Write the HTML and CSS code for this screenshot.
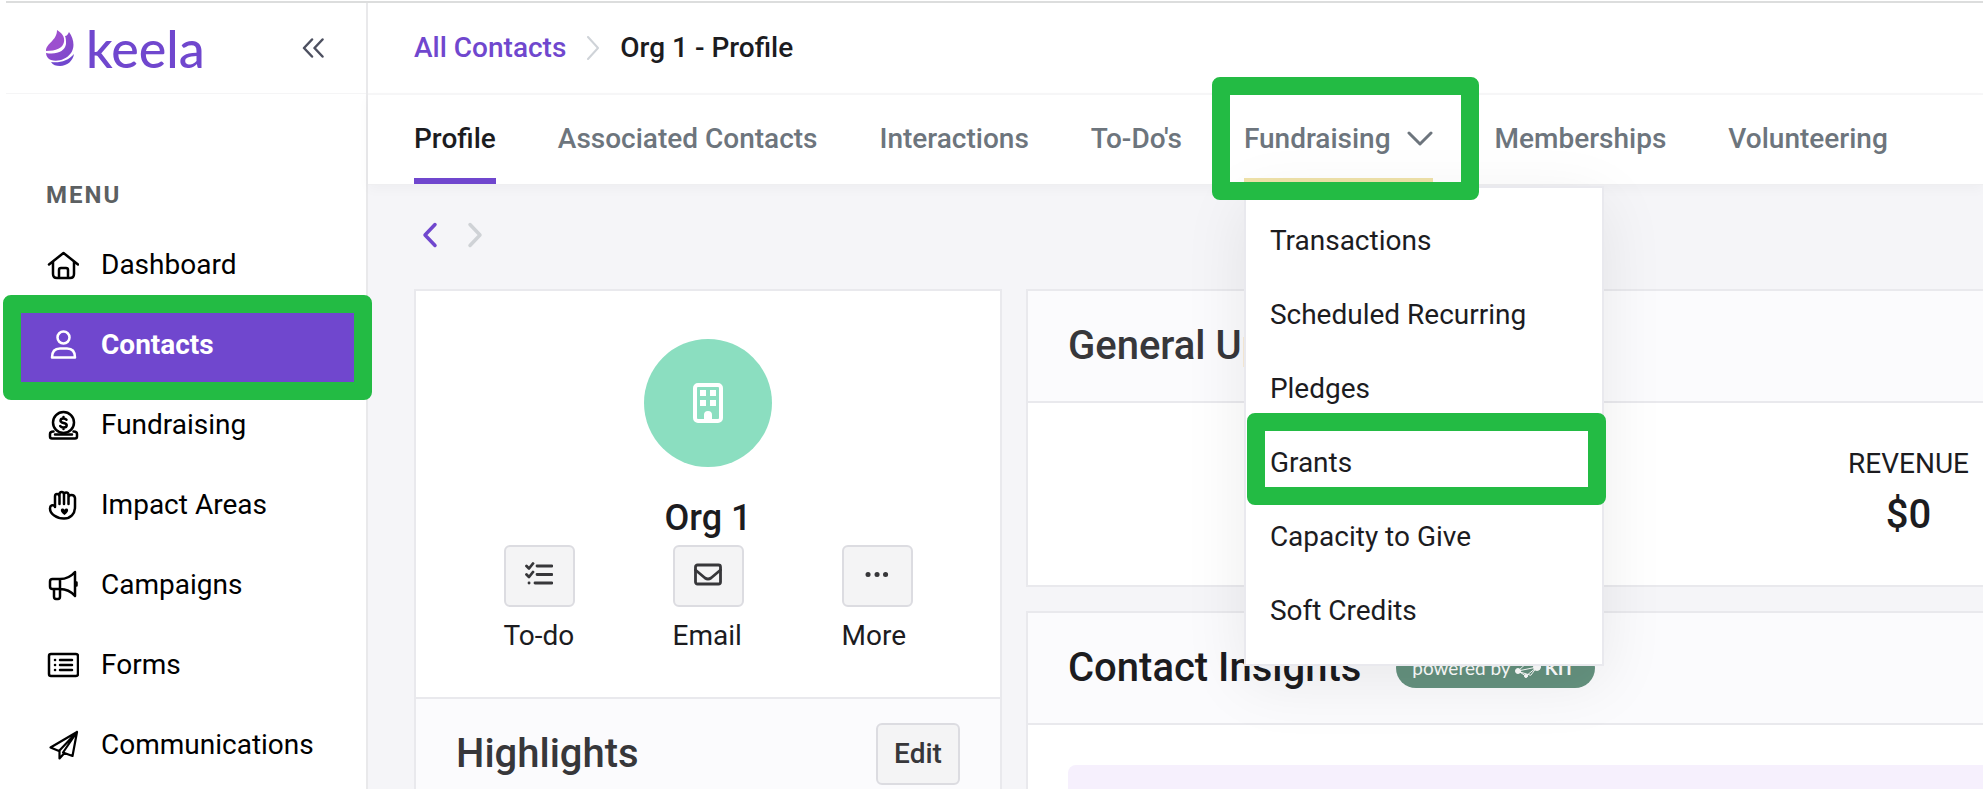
FILE: index.html
```html
<!DOCTYPE html>
<html lang="en">
<head>
<meta charset="utf-8">
<title>Org 1 - Profile</title>
<link rel="stylesheet" href="styles.css">
</head>
<body>
<div class="app">
  <aside class="sidebar">
    <div class="brand-bar">
      <a class="brand" href="#">
        <svg class="brand-mark" width="28" height="36" viewBox="0 0 28 36" aria-hidden="true">
          <defs>
            <linearGradient id="flame" x1="0" y1="0" x2="1" y2="1">
              <stop offset="0" stop-color="#9c4fcf"/>
              <stop offset="1" stop-color="#7a47cb"/>
            </linearGradient>
          </defs>
          <path fill="#9c4fcf" d="M11 0c5 3 8 7 7 12-1 6-8 9-18 9C0 13 11 11 11 0z"/>
          <path fill="url(#flame)" d="M23 2c5 7 6 15 2 21-5 7-14 9-20 7-3-1-5-4-5-7 11 2 19-2 20-9 0-3 0-6-1-8 2 0 3-2 4-4z"/>
          <path fill="#7047ce" d="M28 24c-1 7-7 12-14 12-4 0-7-1-9-4 9 1 17-1 23-8z"/>
        </svg>
        <span>keela</span>
      </a>
      <button class="icon-button collapse" type="button" aria-label="Collapse menu">
        <svg width="22" height="20" viewBox="0 0 22 20"><path d="M10 1.500 2 10l8 8.500M20.500 1.500l-8 8.500 8 8.500"/></svg>
      </button>
    </div>
    <h2 class="menu-title">MENU</h2>
    <nav class="menu">
      <a class="menu-item" href="#">
        <svg class="menu-icon" viewBox="0 0 32 32"><path d="M2 15.500 16.500 4 31 15.500M6 13v12q0 4 4 4h13q4 0 4-4V13M12 28v-7q0-2 2-2h5q2 0 2 2v7"/></svg>
        Dashboard
      </a>
      <a class="menu-item active" href="#">
        <svg class="menu-icon" viewBox="0 0 32 32"><circle cx="16.500" cy="8.500" r="6"/><path d="M5 28.500q0-9 8-9h7q8 0 8 9z"/></svg>
        Contacts
        <span class="marker marker-contacts"></span>
      </a>
      <a class="menu-item" href="#">
        <svg class="menu-icon" viewBox="0 0 32 32"><circle cx="16.500" cy="13.500" r="10.500"/><path d="M19.500 10.800q-1-1.300-3-1.300-3 0-3 2.200c0 3 6.200 1.500 6.200 4.500q0 2.300-3.200 2.300-2.300 0-3.300-1.500M16.500 8v1.500m0 9V20M6.500 22.500Q3 22.500 3 25v2.500Q3 29.500 5 29.500h23q2 0 2-2V25q0-2.500-3.500-2.500M8 25.500h17"/></svg>
        Fundraising
      </a>
      <a class="menu-item" href="#">
        <svg class="menu-icon" viewBox="0 0 32 32"><path d="M8 18V7.500Q8 5 10 5t2.500 2.500V15 5.500Q12.500 3 14.700 3T17 5.500V15 5.500Q17 3.500 19.200 3.500T21.500 6v9V8.500Q21.500 6 24.500 6T28 9v9c0 7-4.500 11.500-11 11.500C9.500 29.500 3 25 3 19.500 3 16 5.500 15.500 8 17"/><path class="solid" d="M17.500 26c-5-3.500-4-6.500-2-6.500q1.500 0 2 1.300 .5-1.300 2-1.300c2 0 3 3-2 6.500z"/></svg>
        Impact Areas
      </a>
      <a class="menu-item" href="#">
        <svg class="menu-icon" viewBox="0 0 32 32"><path d="M13 10H5.500Q3 10 3 12.500v5Q3 20 5.500 20H13q9 0 15 7V3q-6 7-15 7zM13 10v10M7 20v7.500Q7 30 9 30h2q2 0 2-2.500V20M29.500 13.500v3"/></svg>
        Campaigns
      </a>
      <a class="menu-item" href="#">
        <svg class="menu-icon" viewBox="0 0 32 32"><rect x="2" y="5" width="29" height="22" rx="2"/><path d="M13 11h12M13 16h12M13 21h12M8 11h.1M8 16h.1M8 21h.1"/></svg>
        Forms
      </a>
      <a class="menu-item" href="#">
        <svg class="menu-icon plane" viewBox="0 0 32 32"><path d="M30 3 3.500 18.500 12 22zM30 3l-4.500 24L16 23.500zM12.500 22v7.500l5-5.500"/></svg>
        Communications
      </a>
    </nav>
  </aside>

  <main class="main">
    <div class="breadcrumb">
      <a href="#">All Contacts</a>
      <svg width="12" height="24" viewBox="0 0 12 24" aria-hidden="true"><path d="M1 1l10 11L1 23"/></svg>
      <span>Org 1 - Profile</span>
    </div>
    <nav class="tabs">
      <a class="tab current" href="#">Profile</a>
      <a class="tab" href="#">Associated Contacts</a>
      <a class="tab" href="#">Interactions</a>
      <a class="tab" href="#">To-Do's</a>
      <div class="tab-group">
        <button class="tab opened" type="button" aria-expanded="true">
          Fundraising
          <svg width="26" height="15" viewBox="0 0 26 15" aria-hidden="true"><path d="M2 2l11 11L24 2"/></svg>
        </button>
        <div class="dropdown">
          <a href="#">Transactions</a>
          <a href="#">Scheduled Recurring</a>
          <a href="#">Pledges</a>
          <a href="#">Grants<span class="marker marker-grants"></span></a>
          <a href="#">Capacity to Give</a>
          <a href="#">Soft Credits</a>
        </div>
        <span class="marker marker-tab"></span>
      </div>
      <a class="tab" href="#">Memberships</a>
      <a class="tab" href="#">Volunteering</a>
    </nav>

    <div class="content">
      <div class="pager">
        <button class="icon-button previous" type="button" aria-label="Previous contact">
          <svg width="16" height="26" viewBox="0 0 16 26"><path d="M13 2.500 3 13l10 10.500"/></svg>
        </button>
        <button class="icon-button next" type="button" aria-label="Next contact">
          <svg width="16" height="26" viewBox="0 0 16 26"><path d="M3 2.500 13 13 3 23.500"/></svg>
        </button>
      </div>
      <div class="columns">
        <section class="card profile">
          <div class="summary">
            <div class="avatar">
              <svg width="30" height="40" viewBox="0 0 30 40" aria-hidden="true">
                <rect x="2" y="2" width="26" height="36" rx="3" fill="none" stroke="#fff" stroke-width="4"/>
                <path fill="#fff" d="M7 7h6v6H7zM17 7h6v6h-6zM7 17h6v6H7zM17 17h6v6h-6zM11 38v-6q0-4 4-4t4 4v6z"/>
              </svg>
            </div>
            <h1 class="name">Org 1</h1>
            <div class="actions">
              <div class="action">
                <button class="button" type="button" aria-labelledby="todo">
                  <svg width="28" height="24" viewBox="0 0 28 24"><path d="M12 4h15M12 12.500h15M10 21h17M1.500 4l2.500 2.500 4-5M1.500 12.500 4 15l4-5M4 21h.1"/></svg>
                </button>
                <span id="todo">To-do</span>
              </div>
              <div class="action">
                <button class="button" type="button" aria-labelledby="email">
                  <svg width="28" height="24" viewBox="0 0 28 24"><rect x="1.500" y="3" width="25" height="19" rx="2"/><path d="M1.500 8l9.500 8q3 2 6 0l9.500-8"/></svg>
                </button>
                <span id="email">Email</span>
              </div>
              <div class="action">
                <button class="button" type="button" aria-labelledby="more">
                  <svg width="28" height="24" viewBox="0 0 28 24"><path class="dots" d="M5 12.500h.1M14 12.500h.1M22.500 12.500h.1"/></svg>
                </button>
                <span id="more">More</span>
              </div>
            </div>
          </div>
          <div class="card-header">
            <h2>Highlights</h2>
            <button class="button edit" type="button">Edit</button>
          </div>
        </section>

        <div class="stack">
          <section class="card">
            <div class="card-header"><h2>General Up</h2></div>
            <div class="stats">
              <div class="stat"><span>REVENUE</span><strong>$0</strong></div>
            </div>
          </section>
          <section class="card">
            <div class="card-header strong">
              <h2>Contact Insights</h2>
              <span class="badge">powered by
                <svg width="26" height="22" viewBox="0 0 26 22" aria-hidden="true"><path d="M3 14 15 3l7 7-11 9-8-5 19-4-6 8z"/><circle cx="3" cy="14" r="2.500"/><circle cx="22" cy="10" r="3.500"/><circle cx="11" cy="19" r="1.500"/><circle cx="15" cy="3" r="2"/></svg>
                <b>KIT</b>
              </span>
            </div>
            <div class="insights-body"><div class="notice"></div></div>
          </section>
        </div>
      </div>
    </div>
  </main>
</div>
</body>
</html>
```

FILE: styles.css
```css
* {
  box-sizing: border-box;
}

body {
  margin: 0;
  height: 100vh;
  overflow: hidden;
  background: #fff;
  color: #1c1c1f;
  font: 400 28px/40px Roboto, sans-serif;
}

a {
  color: inherit;
  text-decoration: none;
}

h1,
h2 {
  margin: 0;
  font-weight: 500;
}

button {
  font: inherit;
  color: inherit;
}

svg {
  display: block;
  flex: none;
  fill: none;
  stroke: currentColor;
  stroke-linecap: round;
  stroke-linejoin: round;
}

.app {
  display: grid;
  grid-template-columns: 362px minmax(0, 1fr);
  height: calc(100vh - 1px);
  margin: 1px 0 0 6px;
  border-top: 2px solid #dcdddd;
}

.icon-button {
  padding: 0;
  border: 0;
  background: none;
}

/* Sidebar */
.sidebar {
  border-right: 2px solid #e9e9eb;
  background: #fff;
}

.brand-bar {
  display: flex;
  align-items: center;
  justify-content: space-between;
  height: 91px;
  padding: 0 42px 0 40px;
  border-bottom: 1px solid #f5f5f6;
}

.brand {
  display: flex;
  align-items: center;
  gap: 12px;
  color: #7047ce;
  font: 500 52px/60px Lato, sans-serif;
}

.brand-mark {
  stroke: none;
}

.collapse {
  color: #4d5060;
  stroke-width: 2.5;
}

.menu-title {
  padding: 81px 0 0 40px;
  color: #5c6062;
  font-size: 24px;
  font-weight: 700;
  line-height: 40px;
  letter-spacing: 2px;
}

.menu {
  padding-top: 10px;
  color: #000;
}

.menu-item {
  position: relative;
  display: flex;
  align-items: center;
  gap: 22px;
  height: 80px;
  padding-left: 41px;
}

.menu-icon {
  width: 32px;
  height: 32px;
  stroke-width: 2.5;
}

.menu-icon .solid {
  fill: currentColor;
  stroke: none;
}

.menu-icon.plane {
  stroke-width: 2.2;
}

.menu-item.active {
  background: #7047ce;
  color: #fff;
  font-weight: 700;
}

/* Highlight frames */
.marker {
  position: absolute;
  z-index: 5;
  border: 18px solid #23bb44;
  border-radius: 8px;
  pointer-events: none;
}

.marker-contacts {
  inset: -10px -6px -15px -3px;
}

.marker-tab {
  inset: -18px -46px -16px -32px;
}

.marker-grants {
  inset: -13px -4px -5px 1px;
}

/* Header */
.breadcrumb {
  display: flex;
  align-items: center;
  gap: 21px;
  height: 92px;
  padding-left: 46px;
  border-bottom: 2px solid #f7f7f8;
  font-weight: 500;
}

.breadcrumb a {
  color: #7047ce;
}

.breadcrumb svg {
  color: #cfd3d8;
  stroke-width: 2;
}

.tabs {
  position: relative;
  z-index: 2;
  display: flex;
  gap: 62px;
  height: 90px;
  padding-left: 46px;
  border-bottom: 1px solid #efeff1;
  background: #fff;
  box-shadow: 0 4px 12px rgba(0, 0, 0, 0.03);
  color: #6d757d;
  font-weight: 500;
  white-space: nowrap;
}

.tab {
  display: flex;
  align-items: center;
  gap: 16px;
  height: 89px;
  padding: 0 0 2px;
  border: solid transparent;
  border-width: 6px 0;
  background: none;
}

.tab.current {
  border-bottom-color: #7047ce;
  color: #1c1c1f;
}

.tab.opened {
  border-bottom-color: #efe2a9;
}

.tab svg {
  stroke-width: 3;
}

.tab-group {
  position: relative;
}

.dropdown {
  position: absolute;
  top: 91px;
  left: 0;
  width: 360px;
  padding: 16px 0;
  border: 2px solid #e9e9ee;
  background: #fff;
  box-shadow: 0 16px 60px rgba(0, 0, 0, 0.08);
  color: #1c1c1f;
  font-weight: 400;
}

.dropdown a {
  position: relative;
  display: block;
  padding: 17px 24px;
}

/* Content */
.main {
  display: flex;
  flex-direction: column;
}

.content {
  flex: 1;
  min-height: 0;
  overflow: hidden;
  padding-left: 46px;
  background: #f5f5f8;
}

.pager {
  display: flex;
  gap: 29px;
  padding: 37px 0 41px 8px;
}

.pager svg {
  stroke-width: 3.5;
}

.previous {
  color: #7047ce;
}

.next {
  color: #cfd2d6;
}

.columns {
  display: grid;
  grid-template-columns: 588px minmax(0, 1fr);
  gap: 24px;
}

.stack {
  display: grid;
  align-content: start;
  gap: 24px;
}

.card {
  border: 2px solid #e9e9ed;
  background: #fff;
}

.stack .card {
  border-right: 0;
}

.summary {
  display: flex;
  flex-direction: column;
  align-items: center;
  padding: 48px 0 41px;
  border-bottom: 2px solid #e9e9ed;
}

.avatar {
  display: grid;
  place-items: center;
  width: 128px;
  height: 128px;
  border-radius: 50%;
  background: #8bdec0;
}

.avatar svg {
  stroke: none;
}

.name {
  margin: 26px 0 2px;
  font-size: 36px;
  line-height: 50px;
}

.actions {
  display: grid;
  grid-template-columns: repeat(3, 71px);
  gap: 98px;
}

.action {
  display: grid;
  gap: 9px;
}

.button {
  display: flex;
  align-items: center;
  justify-content: center;
  height: 62px;
  padding: 0 0 4px;
  border: 2px solid #dcdce1;
  border-radius: 6px;
  background: #f4f4f5;
  color: #37373a;
}

.button svg {
  stroke-width: 2.8;
}

.button .dots {
  stroke-width: 5;
}

.edit {
  width: 84px;
  padding: 0;
  font-weight: 500;
}

.card-header {
  display: flex;
  align-items: center;
  height: 112px;
  padding: 0 40px;
  border-bottom: 2px solid #e9e9ed;
  background: #fbfbfd;
  color: #37373a;
}

.card-header h2 {
  font-size: 40px;
  line-height: 48px;
}

.card-header.strong {
  gap: 35px;
  color: #1c1c1f;
}

.profile .card-header {
  justify-content: space-between;
}

.stats {
  display: flex;
  justify-content: flex-end;
  height: 182px;
  padding: 41px 14px 0 0;
}

.stat {
  display: grid;
  align-content: start;
  gap: 7px;
  text-align: center;
}

.stat strong {
  font-size: 40px;
  font-weight: 500;
  line-height: 48px;
}

.badge {
  display: flex;
  align-items: center;
  gap: 4px;
  height: 40px;
  padding: 0 20px 0 16px;
  border-radius: 20px;
  background: #65927f;
  color: #fff;
  font: 400 19px/36px Lato, sans-serif;
}

.badge svg {
  fill: none;
  stroke-width: 1;
}

.badge circle {
  fill: currentColor;
}

.insights-body {
  padding: 40px 0 0 40px;
}

.notice {
  height: 72px;
  border-radius: 8px 0 0 8px;
  background: #f6f0fd;
}
```
